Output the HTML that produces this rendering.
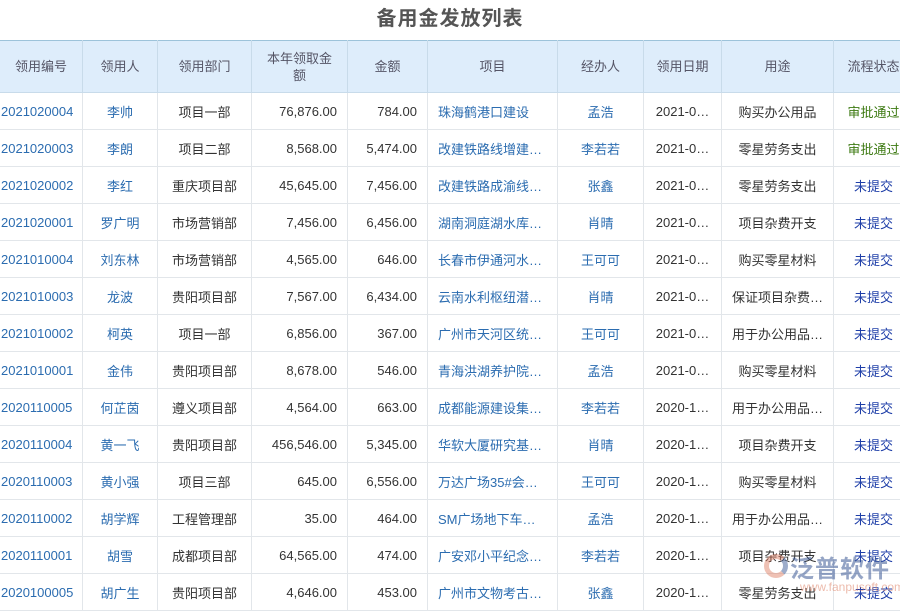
<!DOCTYPE html>
<html><head><meta charset="utf-8"><style>
*{margin:0;padding:0;box-sizing:border-box}
body{width:900px;height:600px;overflow:hidden;background:#fff;font-family:"Liberation Sans","Noto Sans CJK SC",sans-serif;position:relative}
h1{position:absolute;top:2px;left:0;width:900px;text-align:center;font-size:20px;font-weight:bold;color:#555;letter-spacing:1px}
table{position:absolute;top:40px;left:-1px;width:914px;border-collapse:collapse;table-layout:fixed;font-size:13px}
th{height:52px;background:#deedfb;color:#556;font-weight:normal;border:1px solid #c8dbea;border-top:1px solid #9dc3da;line-height:17px;padding:0 12px}
td{height:37px;border:1px solid #e2e6ea;color:#333;text-align:center;white-space:nowrap;overflow:hidden;padding:0 6px}
td.r{text-align:right;padding-right:10px}
td.l{text-align:left;padding-left:10px}
.b{color:#2b6cb0}
.g{color:#3d7a12}
.n{color:#1f3fa8}
td:first-child{text-align:left;padding-left:1px}
.wm{position:absolute;left:790px;top:549px;font-size:24px;font-weight:bold;white-space:nowrap;color:rgba(60,90,150,.55);letter-spacing:1px}
.wm2{position:absolute;left:800px;top:580px;font-size:12px;white-space:nowrap;color:rgba(220,120,90,.5)}
.ic{position:absolute;left:764px;top:554px;width:24px;height:24px;border-radius:50%;border:5px solid rgba(220,120,90,.45);border-right-color:rgba(60,90,150,.5)}
</style></head><body>
<h1>备用金发放列表</h1>
<table>
<colgroup><col style="width:83px"><col style="width:75px"><col style="width:94px"><col style="width:96px"><col style="width:80px"><col style="width:130px"><col style="width:86px"><col style="width:78px"><col style="width:112px"><col style="width:80px"></colgroup>
<tr><th>领用编号</th><th>领用人</th><th>领用部门</th><th>本年领取金额</th><th>金额</th><th>项目</th><th>经办人</th><th>领用日期</th><th>用途</th><th style="padding:0">流程状态</th></tr>
<tr><td class="b">2021020004</td><td class="b">李帅</td><td>项目一部</td><td class="r">76,876.00</td><td class="r">784.00</td><td class="l b">珠海鹤港口建设</td><td class="b">孟浩</td><td>2021-0…</td><td>购买办公用品</td><td class="g">审批通过</td></tr>
<tr><td class="b">2021020003</td><td class="b">李朗</td><td>项目二部</td><td class="r">8,568.00</td><td class="r">5,474.00</td><td class="l b">改建铁路线增建…</td><td class="b">李若若</td><td>2021-0…</td><td>零星劳务支出</td><td class="g">审批通过</td></tr>
<tr><td class="b">2021020002</td><td class="b">李红</td><td>重庆项目部</td><td class="r">45,645.00</td><td class="r">7,456.00</td><td class="l b">改建铁路成渝线…</td><td class="b">张鑫</td><td>2021-0…</td><td>零星劳务支出</td><td class="n">未提交</td></tr>
<tr><td class="b">2021020001</td><td class="b">罗广明</td><td>市场营销部</td><td class="r">7,456.00</td><td class="r">6,456.00</td><td class="l b">湖南洞庭湖水库…</td><td class="b">肖晴</td><td>2021-0…</td><td>项目杂费开支</td><td class="n">未提交</td></tr>
<tr><td class="b">2021010004</td><td class="b">刘东林</td><td>市场营销部</td><td class="r">4,565.00</td><td class="r">646.00</td><td class="l b">长春市伊通河水…</td><td class="b">王可可</td><td>2021-0…</td><td>购买零星材料</td><td class="n">未提交</td></tr>
<tr><td class="b">2021010003</td><td class="b">龙波</td><td>贵阳项目部</td><td class="r">7,567.00</td><td class="r">6,434.00</td><td class="l b">云南水利枢纽潜…</td><td class="b">肖晴</td><td>2021-0…</td><td>保证项目杂费…</td><td class="n">未提交</td></tr>
<tr><td class="b">2021010002</td><td class="b">柯英</td><td>项目一部</td><td class="r">6,856.00</td><td class="r">367.00</td><td class="l b">广州市天河区统…</td><td class="b">王可可</td><td>2021-0…</td><td>用于办公用品…</td><td class="n">未提交</td></tr>
<tr><td class="b">2021010001</td><td class="b">金伟</td><td>贵阳项目部</td><td class="r">8,678.00</td><td class="r">546.00</td><td class="l b">青海洪湖养护院…</td><td class="b">孟浩</td><td>2021-0…</td><td>购买零星材料</td><td class="n">未提交</td></tr>
<tr><td class="b">2020110005</td><td class="b">何芷茵</td><td>遵义项目部</td><td class="r">4,564.00</td><td class="r">663.00</td><td class="l b">成都能源建设集…</td><td class="b">李若若</td><td>2020-1…</td><td>用于办公用品…</td><td class="n">未提交</td></tr>
<tr><td class="b">2020110004</td><td class="b">黄一飞</td><td>贵阳项目部</td><td class="r">456,546.00</td><td class="r">5,345.00</td><td class="l b">华软大厦研究基…</td><td class="b">肖晴</td><td>2020-1…</td><td>项目杂费开支</td><td class="n">未提交</td></tr>
<tr><td class="b">2020110003</td><td class="b">黄小强</td><td>项目三部</td><td class="r">645.00</td><td class="r">6,556.00</td><td class="l b">万达广场35#会…</td><td class="b">王可可</td><td>2020-1…</td><td>购买零星材料</td><td class="n">未提交</td></tr>
<tr><td class="b">2020110002</td><td class="b">胡学辉</td><td>工程管理部</td><td class="r">35.00</td><td class="r">464.00</td><td class="l b">SM广场地下车…</td><td class="b">孟浩</td><td>2020-1…</td><td>用于办公用品…</td><td class="n">未提交</td></tr>
<tr><td class="b">2020110001</td><td class="b">胡雪</td><td>成都项目部</td><td class="r">64,565.00</td><td class="r">474.00</td><td class="l b">广安邓小平纪念…</td><td class="b">李若若</td><td>2020-1…</td><td>项目杂费开支</td><td class="n">未提交</td></tr>
<tr><td class="b">2020100005</td><td class="b">胡广生</td><td>贵阳项目部</td><td class="r">4,646.00</td><td class="r">453.00</td><td class="l b">广州市文物考古…</td><td class="b">张鑫</td><td>2020-1…</td><td>零星劳务支出</td><td class="n">未提交</td></tr>
</table>
<div class="ic"></div>
<div class="wm">泛普软件</div>
<div class="wm2">www.fanpusoft.com</div>
</body></html>
